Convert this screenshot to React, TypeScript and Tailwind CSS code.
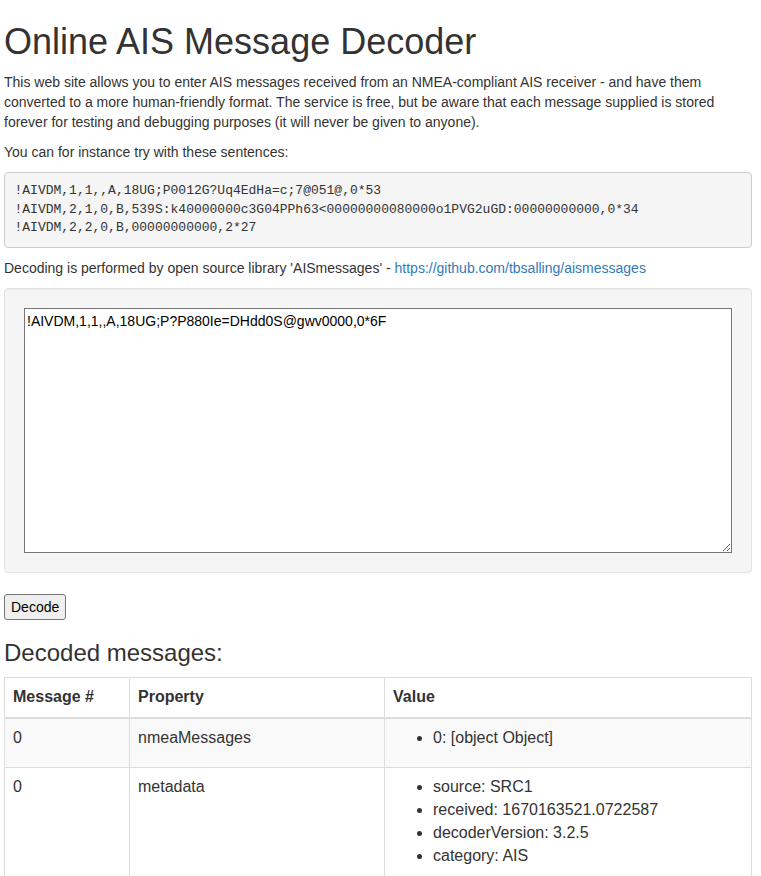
export default function App() {
  const rows: { msg: string; prop: string; values: string[] }[] = [
    { msg: "0", prop: "nmeaMessages", values: ["0: [object Object]"] },
    {
      msg: "0",
      prop: "metadata",
      values: [
        "source: SRC1",
        "received: 1670163521.0722587",
        "decoderVersion: 3.2.5",
        "category: AIS",
      ],
    },
  ];

  return (
    <main className="min-h-screen bg-white pl-[4px] pr-[9px] font-['Liberation_Sans',Arial,sans-serif] text-[14px] leading-[20px] text-[#333]">
      <h1 className="mt-[22px] mb-[10px] text-[36px] leading-[39.6px] font-normal">
        Online AIS Message Decoder
      </h1>
      <p className="mb-[10px]">
        This web site allows you to enter AIS messages received from an
        NMEA-compliant AIS receiver - and have them converted to a more
        human-friendly format. The service is free, but be aware that each
        message supplied is stored forever for testing and debugging purposes
        (it will never be given to anyone).
      </p>
      <p className="mb-[10px]">You can for instance try with these sentences:</p>
      <pre className="mt-[10px] mb-[10px] rounded-[4px] border border-[#ccc] bg-[#f5f5f5] p-[9.5px] font-['Liberation_Mono','Courier_New',monospace] text-[13px] leading-[18.57px] text-[#333] whitespace-pre">
        {"!AIVDM,1,1,,A,18UG;P0012G?Uq4EdHa=c;7@051@,0*53\n!AIVDM,2,1,0,B,539S:k40000000c3G04PPh63<00000000080000o1PVG2uGD:00000000000,0*34\n!AIVDM,2,2,0,B,00000000000,2*27"}
      </pre>
      <p className="mb-[10px]">
        Decoding is performed by open source library 'AISmessages' -{" "}
        <a href="#" className="text-[#337ab7]">
          https://github.com/tbsalling/aismessages
        </a>
      </p>
      <form onSubmit={(e) => e.preventDefault()}>
        <div className="mb-[21px] rounded-[4px] border border-[#e3e3e3] bg-[#f5f5f5] p-[19px] shadow-[inset_0_1px_1px_rgba(0,0,0,0.05)]">
          <textarea
            className="block h-[245px] w-full border border-[#767676] bg-white px-[2px] py-[2px] font-['Liberation_Sans',Arial,sans-serif] text-[14px] leading-[20px] text-black"
            defaultValue="!AIVDM,1,1,,A,18UG;P?P880Ie=DHdd0S@gwv0000,0*6F"
          />
        </div>
        <button
          type="submit"
          className="h-[26px] rounded-[3px] border border-[#767676] bg-[#efefef] px-[6px] text-[14px] leading-[20px] text-black"
        >
          Decode
        </button>
      </form>
      <h3 className="mt-[20px] mb-[10px] text-[24px] leading-[26.4px] font-normal">
        Decoded messages:
      </h3>
      <table className="w-full border-collapse border border-[#ddd] text-[16px] leading-[22.86px]">
        <thead>
          <tr>
            <th className="w-[125px] border border-b-2 border-[#ddd] p-[8px] text-left font-bold">
              Message #
            </th>
            <th className="w-[255px] border border-b-2 border-[#ddd] p-[8px] text-left font-bold">
              Property
            </th>
            <th className="border border-b-2 border-[#ddd] p-[8px] text-left font-bold">
              Value
            </th>
          </tr>
        </thead>
        <tbody>
          {rows.map((r, i) => (
            <tr key={i} className={i % 2 === 0 ? "bg-[#f9f9f9]" : "bg-white"}>
              <td className="border border-[#ddd] p-[8px] align-top">{r.msg}</td>
              <td className="border border-[#ddd] p-[8px] align-top">{r.prop}</td>
              <td className="border border-[#ddd] p-[8px] align-top">
                <ul className="mb-[10px] list-disc pl-[40px]">
                  {r.values.map((v) => (
                    <li key={v}>{v}</li>
                  ))}
                </ul>
              </td>
            </tr>
          ))}
        </tbody>
      </table>
    </main>
  );
}
